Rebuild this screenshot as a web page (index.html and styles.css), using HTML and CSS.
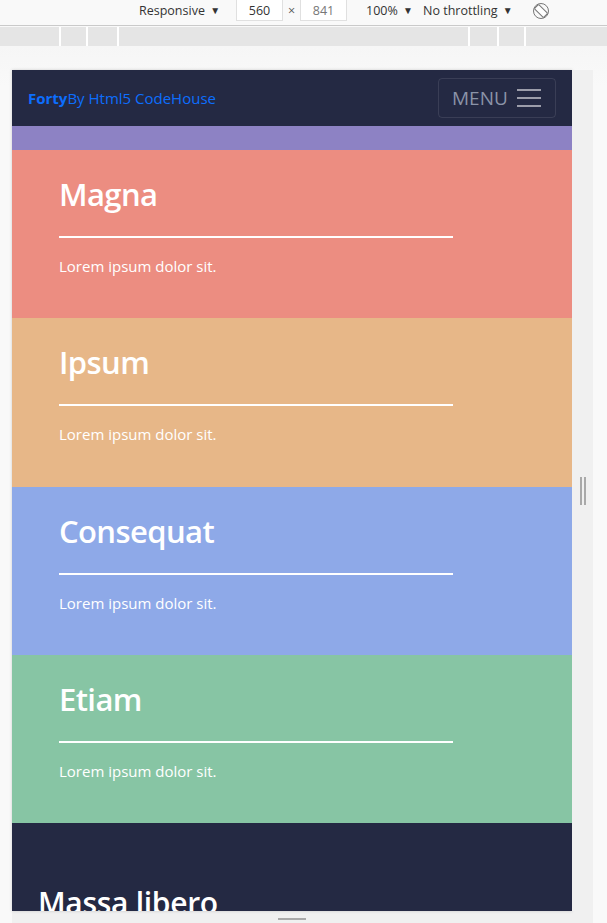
FILE: index.html
```html
<!DOCTYPE html>
<html lang="en">
<head>
<meta charset="utf-8">
<title>Forty - Responsive</title>
<link rel="stylesheet" href="styles.css">
</head>
<body>
<div class="toolbar">
  <span class="tb-item tb-device">Responsive <span class="caret">▼</span></span>
  <span class="tb-input">560</span>
  <span class="tb-x">×</span>
  <span class="tb-input tb-muted">841</span>
  <span class="tb-item tb-zoom">100% <span class="caret">▼</span></span>
  <span class="tb-item tb-throttle">No throttling <span class="caret">▼</span></span>
  <svg class="tb-rotate" width="18" height="18" viewBox="0 0 18 18">
    <circle cx="9" cy="9" r="7.5" fill="none" stroke="#777" stroke-width="1"/>
    <rect x="6" y="2.6" width="6" height="12.8" rx="1" transform="rotate(-45 9 9)" fill="#fff" stroke="#777" stroke-width="1"/>
  </svg>
</div>
<div class="mq-bar">
  <span class="mq s1"></span><span class="mq s2"></span><span class="mq s3"></span><span class="mq s4"></span><span class="mq s5"></span><span class="mq s6"></span><span class="mq s7"></span>
</div>
<div class="stage">
  <div class="stage-row">
    <div class="frame">
      <header class="site-header">
        <a class="logo"><strong>Forty</strong>By Html5 CodeHouse</a>
        <button class="menu-btn">MENU
          <svg class="burger" width="26" height="22" viewBox="0 0 26 22">
            <rect x="1" y="2" width="24" height="2" fill="#9c9daa"/>
            <rect x="1" y="10" width="24" height="2" fill="#9c9daa"/>
            <rect x="1" y="18" width="24" height="2" fill="#9c9daa"/>
          </svg>
        </button>
      </header>
      <div class="strip"></div>
      <section class="tile tile-magna">
        <h2>Magna</h2>
        <p>Lorem ipsum dolor sit.</p>
      </section>
      <section class="tile tile-ipsum">
        <h2>Ipsum</h2>
        <p>Lorem ipsum dolor sit.</p>
      </section>
      <section class="tile tile-consequat">
        <h2>Consequat</h2>
        <p>Lorem ipsum dolor sit.</p>
      </section>
      <section class="tile tile-etiam">
        <h2>Etiam</h2>
        <p>Lorem ipsum dolor sit.</p>
      </section>
      <section class="dark">
        <h2>Massa libero</h2>
      </section>
    </div>
    <div class="side-handle"><span class="grip"></span><span class="grip"></span></div>
  </div>
  <div class="bottom-handle"><span class="grip-h"></span></div>
</div>
</body>
</html>
```

FILE: styles.css
```css
* { box-sizing: border-box; }
html, body { margin: 0; padding: 0; }
body {
  width: 607px;
  height: 923px;
  overflow: hidden;
  background: #f9f9f9;
  font-family: "Open Sans", "Noto Sans", sans-serif;
}

/* devtools toolbar */
.toolbar {
  height: 26px;
  border-bottom: 1px solid #cacaca;
  background: #f9f9f9;
  display: flex;
  align-items: flex-start;
  font-size: 12.5px;
  color: #333;
}
.tb-item { line-height: 22px; white-space: nowrap; }
.caret { font-size: 10px; position: relative; top: -1px; margin-left: 2px; }
.tb-device { margin-left: 139px; }
.tb-input {
  width: 47px;
  height: 21px;
  line-height: 21px;
  text-align: center;
  background: #fff;
  border: 1px solid #e0e0e0;
  border-top: none;
  margin-left: 16px;
}
.tb-muted { color: #777; margin-left: 0; }
.tb-x { width: 17px; text-align: center; line-height: 22px; color: #555; }
.tb-zoom { margin-left: 19px; }
.tb-throttle { margin-left: 10px; }
.tb-rotate { margin-left: 19px; margin-top: 2px; }

.mq-bar {
  margin-top: 1px;
  height: 19px;
  display: flex;
  gap: 2px;
  background: #fff;
}
.mq { background: #e5e5e5; height: 100%; }
.s1 { width: 59px; }
.s2 { width: 25px; }
.s3 { width: 29px; }
.s4 { width: 349px; }
.s5 { width: 27px; }
.s6 { width: 25px; }
.s7 { flex: 1; }

/* stage */
.stage {
  padding: 24px 0 0 12px;
  background: linear-gradient(#f6f6f6, #f9f9f9 40px);
}
.stage-row { display: flex; }
.frame {
  width: 560px;
  height: 841px;
  overflow: hidden;
  background: #242943;
  box-shadow: 0 0 3px rgba(0,0,0,0.18);
  color: #fff;
}
.side-handle {
  width: 21px;
  height: 841px;
  background: #f0f0f0;
  display: flex;
  justify-content: center;
  align-items: center;
  gap: 2px;
}
.grip { width: 2px; height: 28px; background: #a9a9a9; }
.bottom-handle {
  width: 581px;
  height: 12px;
  background: #f0f0f0;
  display: flex;
  justify-content: center;
  padding-right: 21px;
  padding-top: 7px;
}
.grip-h { width: 28px; height: 2px; background: #a9a9a9; }

/* site */
.site-header {
  height: 56px;
  display: flex;
  align-items: center;
  justify-content: space-between;
  padding: 0 16px;
  background: #242943;
}
.logo {
  color: #0d6efd;
  font-size: 15px;
  text-decoration: none;
}
.logo strong { font-weight: 700; }
.menu-btn {
  width: 118px;
  height: 40px;
  border: 1px solid rgba(255,255,255,0.1);
  border-radius: 4px;
  background: transparent;
  color: #8b93a8;
  font-family: inherit;
  font-size: 19px;
  display: flex;
  align-items: center;
  padding: 0 0 0 13px;
  gap: 8px;
}
.burger { display: block; }
.strip { height: 24px; background: #8d82c4; }

.tile {
  height: 168.25px;
  padding: 21px 47px 0;
}
.tile h2 {
  margin: 0;
  font-size: 31px;
  letter-spacing: -0.6px;
  font-weight: 600;
  line-height: 46px;
  width: 394px;
  padding-bottom: 19px;
  border-bottom: 2px solid #fff;
}
.tile p {
  margin: 16px 0 0;
  font-size: 15px;
  line-height: 24px;
}
.tile-magna { background: #ec8d81; }
.tile-ipsum { background: #e7b788; }
.tile-consequat { background: #8ea9e8; }
.tile-etiam { background: #87c5a4; }

.dark {
  padding: 58px 26px 0;
}
.dark h2 {
  margin: 0;
  font-size: 30px;
  letter-spacing: -0.3px;
  font-weight: 600;
  line-height: 44px;
}
```
